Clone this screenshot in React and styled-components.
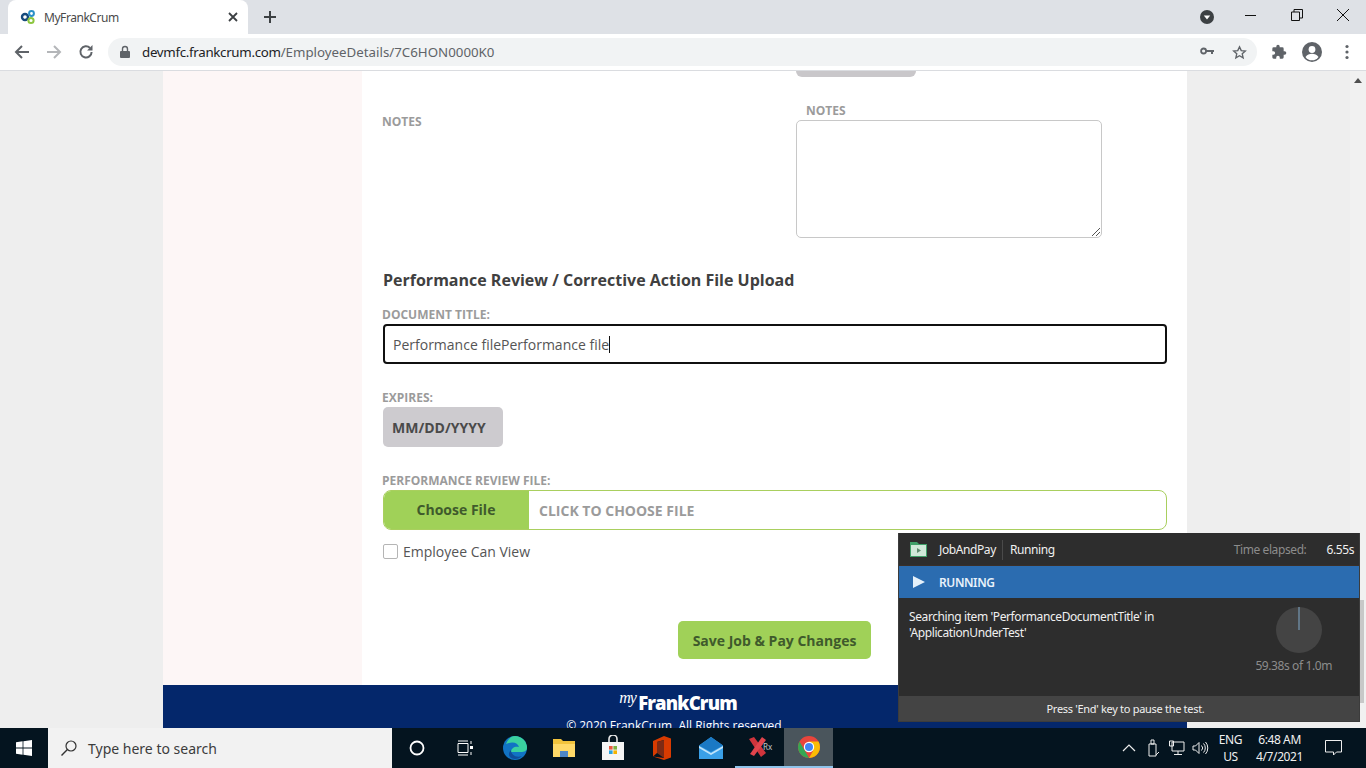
import styled, { createGlobalStyle } from "styled-components";

const GlobalStyle = createGlobalStyle`
  html, body {
    margin: 0;
    padding: 0;
    overflow: hidden;
  }
  * {
    box-sizing: border-box;
  }
`;

const Screen = styled.div`
  position: relative;
  width: 1366px;
  height: 768px;
  display: flex;
  flex-direction: column;
  overflow: hidden;
  background: #fff;
  font-family: "Open Sans", sans-serif;
`;

// Browser chrome
const TabStrip = styled.div`
  height: 34px;
  flex: none;
  display: flex;
  align-items: flex-end;
  background: #dee1e6;
  padding-left: 8px;
`;

const Tab = styled.div`
  width: 240px;
  height: 34px;
  background: #fff;
  border-radius: 8px 8px 0 0;
  display: flex;
  align-items: center;
  padding: 0 9px 0 12px;
  font: 12px "Noto Sans", sans-serif;
  color: #4a4a4a;
`;

const TabTitle = styled.span`
  margin-left: 8px;
  flex: 1;
  letter-spacing: -0.45px;
`;

const NewTab = styled.div`
  width: 28px;
  height: 34px;
  margin-left: 8px;
  display: flex;
  align-items: center;
  justify-content: center;
`;

const WindowControls = styled.div`
  margin-left: auto;
  height: 34px;
  display: flex;
  align-items: center;
`;

const ProfileDot = styled.div`
  width: 46px;
  display: flex;
  align-items: center;
  padding-left: 19px;
  margin-right: 2px;
`;

const WinButton = styled.div`
  width: 46px;
  height: 30px;
  display: flex;
  align-items: center;
  justify-content: center;
  margin-bottom: 4px;
`;

const Toolbar = styled.div`
  height: 37px;
  flex: none;
  background: #fff;
  border-bottom: 1px solid #dadce0;
  display: flex;
  align-items: center;
  padding-left: 6px;
`;

const NavButton = styled.div`
  width: 32px;
  height: 28px;
  display: flex;
  align-items: center;
  justify-content: center;
`;

const Omnibox = styled.div`
  margin-left: 6px;
  width: 1149px;
  height: 28px;
  border-radius: 14px;
  background: #f1f3f4;
  display: flex;
  align-items: center;
  padding: 0 10px 0 11px;
  font: 13.3px "Noto Sans", sans-serif;
`;

const Host = styled.span`
  color: #202124;
  margin-left: 11px;
  letter-spacing: -0.3px;
`;

const UrlPath = styled.span`
  color: #5f6368;
  flex: 1;
`;

const OmniIcons = styled.div`
  display: flex;
  align-items: center;
  gap: 18px;
`;

const ToolIcons = styled.div`
  margin-left: 14px;
  display: flex;
  align-items: center;
  gap: 14px;
`;

const MenuDots = styled.svg`
  margin-left: 8px;
`;

// Page body
const Viewport = styled.div`
  flex: 1;
  min-height: 0;
  display: flex;
  overflow: hidden;
  background: #eee;
`;

const Canvas = styled.div`
  flex: 1;
  display: flex;
  justify-content: center;
`;

const Page = styled.div`
  width: 1024px;
  display: flex;
  flex-direction: column;
  background: #fff;
  height: 680px;
`;

const PageColumns = styled.div`
  height: 614px;
  flex: none;
  display: flex;
`;

const SideColumn = styled.div`
  width: 199px;
  background: #fdf6f6;
`;

const Main = styled.div`
  flex: 1;
  padding: 0 20px 0 21px;
  background: #fff;
`;

const CutButton = styled.div`
  width: 120px;
  height: 6px;
  margin-left: 413px;
  background: #c9c7ca;
  border-radius: 0 0 6px 6px;
`;

const NotesRow = styled.div`
  height: 162px;
  padding-top: 34px;
  display: flex;
`;

const NotesLabelCell = styled.div`
  width: 413px;
  padding-top: 2px;
`;

const NotesField = styled.div`
  margin-top: -9px;
  width: 306px;
  display: flex;
  flex-direction: column;
`;

const FieldLabel = styled.div`
  margin-left: -1px;
  font-size: 12px;
  line-height: 17px;
  font-weight: 700;
  color: #9b9b9b;
`;

const NotesFieldLabel = styled(FieldLabel)`
  padding-left: 11px;
  margin-bottom: 1px;
`;

const NotesArea = styled.div`
  position: relative;
  height: 118px;
  border: 1px solid #c8c8c8;
  border-radius: 5px;
`;

const Grip = styled.svg`
  position: absolute;
  right: 0;
  bottom: 0;
`;

const SectionTitle = styled.h2`
  margin: 30px 0 0;
  font-size: 16px;
  line-height: 22px;
  font-weight: 700;
  color: #404040;
`;

const TitleLabel = styled(FieldLabel)`
  margin-top: 15px;
`;

const TitleInput = styled.div`
  height: 40px;
  margin-top: 1px;
  border: 2px solid #101010;
  border-radius: 4px;
  display: flex;
  align-items: center;
  padding-left: 8px;
  font-size: 14px;
  color: #555;
`;

const Caret = styled.span`
  display: inline-block;
  width: 1px;
  height: 17px;
  background: #111;
`;

const ExpiresLabel = styled(FieldLabel)`
  margin-top: 25px;
`;

const DateChip = styled.div`
  width: 120px;
  height: 40px;
  margin-top: 1px;
  background: #cdcbcf;
  border-radius: 5px;
  display: flex;
  align-items: center;
  padding-left: 9px;
  font-size: 14px;
  font-weight: 700;
  color: #4a4a4a;
`;

const FileLabel = styled(FieldLabel)`
  margin-top: 25px;
`;

const FilePicker = styled.div`
  height: 40px;
  margin-top: 1px;
  border: 1px solid #a9cf5e;
  border-radius: 8px;
  display: flex;
  align-items: center;
  overflow: hidden;
`;

const ChooseButton = styled.div`
  width: 146px;
  height: 40px;
  margin-left: -1px;
  padding-bottom: 2px;
  background: #a0d158;
  display: flex;
  align-items: center;
  justify-content: center;
  font-size: 14px;
  font-weight: 700;
  color: #3f5a2c;
`;

const FileHint = styled.span`
  margin-left: 10px;
  font-size: 14px;
  font-weight: 700;
  color: #9b9b9b;
`;

const CheckRow = styled.label`
  margin-top: 12px;
  display: flex;
  align-items: center;
  gap: 5px;
  font-size: 14px;
  color: #555;
`;

const CheckBox = styled.span`
  width: 15px;
  height: 15px;
  border: 1px solid #b5b5b5;
  border-radius: 2px;
`;

const SaveRow = styled.div`
  margin-top: 60px;
  display: flex;
  justify-content: center;
  padding-right: 1px;
`;

const SaveButton = styled.div`
  width: 193px;
  height: 38px;
  background: #a0d158;
  border-radius: 5px;
  display: flex;
  align-items: center;
  justify-content: center;
  font-size: 14px;
  font-weight: 700;
  color: #3f5a2c;
`;

const Footer = styled.div`
  height: 66px;
  flex: none;
  background: #04276b;
  color: #fff;
  display: flex;
  flex-direction: column;
  align-items: center;
`;

const Logo = styled.div`
  margin-top: 7px;
  display: flex;
  align-items: flex-start;
  font-size: 18.5px;
  line-height: 22px;
  font-weight: 800;
  letter-spacing: -0.85px;
  padding-left: 6px;
`;

const LogoMy = styled.span`
  font: italic 400 16px/12px "Liberation Serif", serif;
  margin-right: 2px;
`;

const Copyright = styled.div`
  font-size: 12px;
  line-height: 16px;
  margin-top: 4px;
  padding-left: 1px;
`;

const ScrollTrack = styled.div`
  width: 16px;
  flex: none;
  background: #f1f1f1;
  display: flex;
  flex-direction: column;
  align-items: center;
`;

const ScrollArrow = styled.div`
  margin-top: 7px;
  width: 0;
  height: 0;
  border-left: 4px solid transparent;
  border-right: 4px solid transparent;
  border-bottom: 5px solid #505050;
`;

const ScrollThumb = styled.div`
  width: 12px;
  height: 103px;
  margin-top: 517px;
  background: #c8c8c8;
`;

// Test runner overlay
const Runner = styled.div`
  position: absolute;
  left: 898px;
  top: 533px;
  width: 462px;
  height: 189px;
  display: flex;
  flex-direction: column;
  background: #2d2d2d;
  color: #f0f0f0;
  font: 12px "Noto Sans", sans-serif;
  letter-spacing: -0.4px;
  border: 1px solid #3c3c3c;
  border-top: 0;
`;

const RunnerHead = styled.div`
  height: 33px;
  flex: none;
  display: flex;
  align-items: center;
  padding: 1px 5px 0 11px;
  border-bottom: 1px solid #3a2f28;
`;

const HeadName = styled.span`
  margin-left: 12px;
  padding-right: 6px;
  border-right: 1px solid #4a4a4a;
  line-height: 20px;
`;

const HeadState = styled.span`
  margin-left: 7px;
  flex: 1;
`;

const Elapsed = styled.span`
  color: #8c8c8c;
  margin-right: 20px;
`;

const StatusBar = styled.div`
  height: 32px;
  flex: none;
  background: #2b6cb0;
  display: flex;
  align-items: center;
  padding-left: 14px;
  font-weight: 600;
  color: #e8f1fa;
`;

const StatusText = styled.span`
  margin-left: 14px;
`;

const RunnerBody = styled.div`
  flex: 1;
  display: flex;
  justify-content: space-between;
  padding: 11px 27px 0 10px;
  line-height: 16px;
`;

const RunnerMessage = styled.div`
  width: 280px;
`;

const Progress = styled.div`
  margin-top: -2px;
  display: flex;
  flex-direction: column;
  align-items: center;
  gap: 5px;
  color: #8c8c8c;
`;

const ProgressDial = styled.svg`
  margin-left: 11px;
`;

const RunnerFoot = styled.div`
  height: 25px;
  flex: none;
  background: #444;
  display: flex;
  align-items: center;
  justify-content: center;
  padding-right: 7px;
  font-size: 11px;
  letter-spacing: -0.3px;
`;

// Windows taskbar
const Taskbar = styled.div`
  height: 40px;
  flex: none;
  background: #04141f;
  display: flex;
  align-items: center;
  color: #fff;
`;

const StartButton = styled.div`
  width: 48px;
  height: 40px;
  display: flex;
  align-items: center;
  justify-content: center;
`;

const SearchBox = styled.div`
  width: 344px;
  height: 40px;
  background: #f2f2f2;
  display: flex;
  align-items: center;
  padding-left: 12px;
  gap: 10px;
  font: 14px "Noto Sans", sans-serif;
  color: #3c3c3c;
`;

const TaskIcon = styled.div`
  width: 49px;
  height: 40px;
  display: flex;
  align-items: center;
  justify-content: center;
  background: ${(p) => (p.$active ? "#4a555c" : "transparent")};
  border-bottom: ${(p) => (p.$open ? "2px solid #8fc3ea" : "0")};
`;

const Tray = styled.div`
  margin-left: auto;
  height: 40px;
  display: flex;
  align-items: center;
  padding-right: 9px;
  font: 12px "Noto Sans", sans-serif;
  letter-spacing: -0.4px;
  color: #f0f0f0;
`;

const TrayIcons = styled.div`
  display: flex;
  align-items: center;
  margin-right: 6px;
`;

const TraySlot = styled.div`
  width: 24px;
  display: flex;
  justify-content: center;
`;

const TrayText = styled.div`
  text-align: center;
  line-height: 17px;
  margin-right: ${(p) => p.$gap}px;
`;

const Notify = styled.div`
  width: 48px;
  display: flex;
  justify-content: center;
`;

const grayStroke = { fill: "none", stroke: "#5f6368", strokeWidth: 2 };

const App = () => {
  return (
    <Screen>
      <GlobalStyle />
      <TabStrip>
        <Tab>
          <svg width="16" height="16" viewBox="0 0 16 16">
            <circle cx="5" cy="8" r="3" fill="none" stroke="#174a7c" strokeWidth="2.4" />
            <circle cx="11.5" cy="4.5" r="2.4" fill="none" stroke="#2a8fc7" strokeWidth="2" />
            <circle cx="11" cy="11.5" r="2.6" fill="none" stroke="#8cc63f" strokeWidth="2" />
          </svg>
          <TabTitle>MyFrankCrum</TabTitle>
          <svg width="12" height="12" viewBox="0 0 12 12">
            <path d="M2 2l8 8M10 2l-8 8" stroke="#3c4043" strokeWidth="1.8" />
          </svg>
        </Tab>
        <NewTab>
          <svg width="14" height="14" viewBox="0 0 14 14">
            <path d="M7 1v12M1 7h12" stroke="#3c4043" strokeWidth="2" />
          </svg>
        </NewTab>
        <WindowControls>
          <ProfileDot>
            <svg width="16" height="16" viewBox="0 0 16 16">
              <circle cx="8" cy="8" r="7" fill="#3c4043" />
              <path d="M4.8 6.6h6.4L8 10.6z" fill="#fff" />
            </svg>
          </ProfileDot>
          <WinButton>
            <svg width="12" height="12" viewBox="0 0 12 12">
              <path d="M0 6.5h11" stroke="#111" />
            </svg>
          </WinButton>
          <WinButton>
            <svg width="12" height="12" viewBox="0 0 12 12">
              <path d="M.5 3h8v8.5h-8zM3 3V.5h8.5V9H8.5" fill="none" stroke="#111" />
            </svg>
          </WinButton>
          <WinButton>
            <svg width="14" height="14" viewBox="0 0 14 14">
              <path d="M1 1l12 12M13 1L1 13" stroke="#111" />
            </svg>
          </WinButton>
        </WindowControls>
      </TabStrip>

      <Toolbar>
        <NavButton>
          <svg width="16" height="16" viewBox="0 0 16 16">
            <path d="M15 8H2M8 2L2 8l6 6" {...grayStroke} />
          </svg>
        </NavButton>
        <NavButton>
          <svg width="16" height="16" viewBox="0 0 16 16">
            <path d="M1 8h13M8 2l6 6-6 6" {...grayStroke} stroke="#b4b6b9" />
          </svg>
        </NavButton>
        <NavButton>
          <svg width="16" height="16" viewBox="0 0 16 16">
            <path d="M13.6 8a5.6 5.6 0 1 1-1.6-4" {...grayStroke} />
            <path d="M14.5 1v5.4H9.1z" fill="#5f6368" />
          </svg>
        </NavButton>
        <Omnibox>
          <svg width="12" height="14" viewBox="0 0 12 14">
            <path d="M2 6h8a1 1 0 0 1 1 1v5a1 1 0 0 1-1 1H2a1 1 0 0 1-1-1V7a1 1 0 0 1 1-1z" fill="#5f6368" />
            <path d="M3.5 6V4a2.5 2.5 0 0 1 5 0v2" fill="none" stroke="#5f6368" strokeWidth="1.4" />
          </svg>
          <Host>devmfc.frankcrum.com</Host>
          <UrlPath>/EmployeeDetails/7C6HON0000K0</UrlPath>
          <OmniIcons>
            <svg width="14" height="10" viewBox="0 0 14 10">
              <circle cx="3.6" cy="4" r="2.5" fill="none" stroke="#5f6368" strokeWidth="1.8" />
              <path d="M6 3h8v2h-1v2h-2V5H6z" fill="#5f6368" />
            </svg>
            <svg width="15" height="15" viewBox="0 0 24 24">
              <path d="M12 3l2.8 6 6.5.7-4.9 4.4 1.4 6.4L12 17.2l-5.8 3.3 1.4-6.4-4.9-4.4 6.5-.7z" fill="none" stroke="#5f6368" strokeWidth="2.2" />
            </svg>
          </OmniIcons>
        </Omnibox>
        <ToolIcons>
          <svg width="16" height="16" viewBox="0 0 24 24">
            <path d="M20.5 11H19V7a2 2 0 0 0-2-2h-4V3.500a2.500 2.500 0 0 0-5 0V5H4a2 2 0 0 0-2 2v3.800h1.500a2.700 2.700 0 0 1 0 5.400H2V20a2 2 0 0 0 2 2h3.800v-1.500a2.700 2.700 0 0 1 5.400 0V22H17a2 2 0 0 0 2-2v-4h1.500a2.500 2.500 0 0 0 0-5z" fill="#5f6368" />
          </svg>
          <svg width="22" height="22" viewBox="0 0 22 22">
            <circle cx="11" cy="11" r="10" fill="#5f6368" />
            <circle cx="11" cy="8.500" r="3.400" fill="#fff" />
            <path d="M4.500 16c1.500-2.400 4-3.300 6.500-3.300s5 .9 6.500 3.300a8 8 0 0 1-13 0z" fill="#fff" />
          </svg>
          <MenuDots width="4" height="16" viewBox="0 0 4 16">
            <circle cx="2" cy="2.500" r="1.600" fill="#5f6368" />
            <circle cx="2" cy="8" r="1.600" fill="#5f6368" />
            <circle cx="2" cy="13.500" r="1.600" fill="#5f6368" />
          </MenuDots>
        </ToolIcons>
      </Toolbar>

      <Viewport>
        <Canvas>
          <Page>
            <PageColumns>
              <SideColumn />
              <Main>
                <CutButton />
                <NotesRow>
                  <NotesLabelCell>
                    <FieldLabel>NOTES</FieldLabel>
                  </NotesLabelCell>
                  <NotesField>
                    <NotesFieldLabel>NOTES</NotesFieldLabel>
                    <NotesArea>
                      <Grip width="12" height="12" viewBox="0 0 12 12">
                        <path d="M11 3l-8 8M11 7l-4 4" stroke="#555" strokeWidth="1" />
                      </Grip>
                    </NotesArea>
                  </NotesField>
                </NotesRow>
                <SectionTitle>Performance Review / Corrective Action File Upload</SectionTitle>
                <TitleLabel>DOCUMENT TITLE:</TitleLabel>
                <TitleInput>
                  Performance filePerformance file
                  <Caret />
                </TitleInput>
                <ExpiresLabel>EXPIRES:</ExpiresLabel>
                <DateChip>MM/DD/YYYY</DateChip>
                <FileLabel>PERFORMANCE REVIEW FILE:</FileLabel>
                <FilePicker>
                  <ChooseButton>Choose File</ChooseButton>
                  <FileHint>CLICK TO CHOOSE FILE</FileHint>
                </FilePicker>
                <CheckRow>
                  <CheckBox />
                  Employee Can View
                </CheckRow>
                <SaveRow>
                  <SaveButton>Save Job &amp; Pay Changes</SaveButton>
                </SaveRow>
              </Main>
            </PageColumns>
            <Footer>
              <Logo>
                <LogoMy>my</LogoMy>
                FrankCrum
              </Logo>
              <Copyright>© 2020 FrankCrum. All Rights reserved.</Copyright>
            </Footer>
          </Page>
        </Canvas>
        <ScrollTrack>
          <ScrollArrow />
          <ScrollThumb />
        </ScrollTrack>
      </Viewport>

      <Taskbar>
        <StartButton>
          <svg width="16" height="16" viewBox="0 0 16 16">
            <path d="M0 2.200l6.600-.9v6.300H0zM7.400 1.200L16 0v7.600H7.400zM0 8.400h6.600v6.300L0 13.800zM7.400 8.400H16V16l-8.600-1.200z" fill="#fff" />
          </svg>
        </StartButton>
        <SearchBox>
          <svg width="18" height="18" viewBox="0 0 18 18">
            <circle cx="11" cy="7" r="5" fill="none" stroke="#333" strokeWidth="1.200" />
            <path d="M7.400 10.600L1.500 16.500" stroke="#333" strokeWidth="1.400" />
          </svg>
          Type here to search
        </SearchBox>
        <TaskIcon>
          <svg width="16" height="16" viewBox="0 0 16 16">
            <circle cx="8" cy="8" r="6.500" fill="none" stroke="#fff" strokeWidth="1.800" />
          </svg>
        </TaskIcon>
        <TaskIcon>
          <svg width="18" height="16" viewBox="0 0 18 16">
            <path d="M1 3.500h10v9H1zM1 1h10M1 15h10M14 1v3M14 12v3" fill="none" stroke="#fff" />
            <rect x="13" y="6" width="3" height="3" fill="#fff" />
          </svg>
        </TaskIcon>
        <TaskIcon>
          <svg width="26" height="26" viewBox="0 0 26 26">
            <circle cx="13" cy="13" r="12" fill="#1173c4" />
            <path d="M13 1a12 12 0 0 1 12 12c0 3-3 4-6 4H9c0-4 4-6 8-5-1-4-6-6-13-3 2-5 5-8 9-8z" fill="#3ad1a0" />
            <path d="M9 15c0 5 5 8 11 6-2 2-4 3-7 3-6 0-8-5-4-9z" fill="#0f4c9a" />
          </svg>
        </TaskIcon>
        <TaskIcon>
          <svg width="24" height="22" viewBox="0 0 24 22">
            <path d="M1 2h8l2 2h12v16H1z" fill="#f2c33c" />
            <path d="M1 7h22v13H1z" fill="#ffd968" />
            <path d="M8 14h8v6H8z" fill="#4f86c6" />
          </svg>
        </TaskIcon>
        <TaskIcon>
          <svg width="24" height="26" viewBox="0 0 24 26">
            <path d="M8 7V4a4 4 0 0 1 8 0v3" fill="none" stroke="#e8e8e8" strokeWidth="1.600" />
            <path d="M1 7h22v18H1z" fill="#f5f5f5" />
            <rect x="8" y="11" width="3.600" height="3.600" fill="#e9573f" />
            <rect x="12.400" y="11" width="3.600" height="3.600" fill="#7cb342" />
            <rect x="8" y="15.400" width="3.600" height="3.600" fill="#29a3e0" />
            <rect x="12.400" y="15.400" width="3.600" height="3.600" fill="#f4b400" />
          </svg>
        </TaskIcon>
        <TaskIcon>
          <svg width="20" height="24" viewBox="0 0 20 24">
            <path d="M12 0l7 2.500v19L12 24 1 20.500 12 22V4L5 6v11l-4 3.500V5z" fill="#d83b01" />
            <path d="M5 6l7-2v18L5 17z" fill="#7d2a14" />
          </svg>
        </TaskIcon>
        <TaskIcon>
          <svg width="24" height="22" viewBox="0 0 24 22">
            <path d="M12 0l12 8.500V22H0V8.500z" fill="#3aa0e8" />
            <path d="M0 8.500L12 15l12-6.500L12 0z" fill="#1b79c4" />
            <path d="M0 9l12 7 12-7v2L12 18 0 11z" fill="#bfe3fa" />
          </svg>
        </TaskIcon>
        <TaskIcon $open>
          <svg width="28" height="22" viewBox="0 0 28 22">
            <path d="M3 3l5-2 12 16-5 4z" fill="#d0343c" />
            <path d="M16 1l4 3L8 20l-4-2z" fill="#e2444c" />
            <text x="17" y="14" fontSize="8" fontFamily="Noto Sans, sans-serif" fill="#c7c7c7">Rx</text>
          </svg>
        </TaskIcon>
        <TaskIcon $active $open>
          <svg width="24" height="24" viewBox="0 0 24 24">
            <circle cx="12" cy="12" r="11" fill="#e8453c" />
            <path d="M12 23A11 11 0 0 1 2.500 6.500L8 16l4 7z" fill="#34a853" />
            <path d="M12 23a11 11 0 0 0 9.500-16.500H12l4 9.500z" fill="#fbbc05" />
            <circle cx="12" cy="12" r="5.200" fill="#fff" />
            <circle cx="12" cy="12" r="4" fill="#4285f4" />
          </svg>
        </TaskIcon>
        <Tray>
          <TrayIcons>
            <TraySlot>
              <svg width="14" height="8" viewBox="0 0 14 8">
                <path d="M1 7l6-6 6 6" fill="none" stroke="#eee" strokeWidth="1.200" />
              </svg>
            </TraySlot>
            <TraySlot>
              <svg width="14" height="18" viewBox="0 0 14 18">
                <path d="M3 5h7v12H3zM5 1h3v4H5zM10 16l3-3" fill="none" stroke="#eee" />
              </svg>
            </TraySlot>
            <TraySlot>
              <svg width="16" height="16" viewBox="0 0 16 16">
                <path d="M3 2h12v9H3zM9 11v3M5 14.500h8M.5 1h4v5h-4z" fill="none" stroke="#eee" />
              </svg>
            </TraySlot>
            <TraySlot>
              <svg width="17" height="14" viewBox="0 0 17 14">
                <path d="M1 5h2.500L7 1.500v11L3.500 9H1zM9.500 4.500a3.500 3.500 0 0 1 0 5M11.500 2.500a6.500 6.500 0 0 1 0 9M13.500 1a9 9 0 0 1 0 12" fill="none" stroke="#eee" />
              </svg>
            </TraySlot>
          </TrayIcons>
          <TrayText $gap={14}>
            ENG
            <br />
            US
          </TrayText>
          <TrayText $gap={6}>
            6:48 AM
            <br />
            4/7/2021
          </TrayText>
          <Notify>
            <svg width="17" height="16" viewBox="0 0 17 16">
              <path d="M.5.5h16v11.500h-5L8.500 15V12H.5z" fill="none" stroke="#eee" />
            </svg>
          </Notify>
        </Tray>
      </Taskbar>

      <Runner>
        <RunnerHead>
          <svg width="17" height="15" viewBox="0 0 17 15">
            <path d="M0 0h7l2 2h8v13H0z" fill="#3f9f68" />
            <rect x="1" y="3" width="15" height="11" fill="#cfe8d8" />
            <path d="M7 6l4 2.500L7 11z" fill="#5f8a6f" />
          </svg>
          <HeadName>JobAndPay</HeadName>
          <HeadState>Running</HeadState>
          <Elapsed>Time elapsed:</Elapsed>
          <span>6.55s</span>
        </RunnerHead>
        <StatusBar>
          <svg width="12" height="12" viewBox="0 0 12 12">
            <path d="M0 0l12 6-12 6z" fill="#e4f0fa" />
          </svg>
          <StatusText>RUNNING</StatusText>
        </StatusBar>
        <RunnerBody>
          <RunnerMessage>
            Searching item 'PerformanceDocumentTitle' in 'ApplicationUnderTest'
          </RunnerMessage>
          <Progress>
            <ProgressDial width="46" height="46" viewBox="0 0 46 46">
              <circle cx="23" cy="23" r="23" fill="#444" />
              <path d="M23 0v23" stroke="#7fa8c9" strokeWidth="1" />
            </ProgressDial>
            59.38s of 1.0m
          </Progress>
        </RunnerBody>
        <RunnerFoot>Press 'End' key to pause the test.</RunnerFoot>
      </Runner>
    </Screen>
  );
};

export default App;
